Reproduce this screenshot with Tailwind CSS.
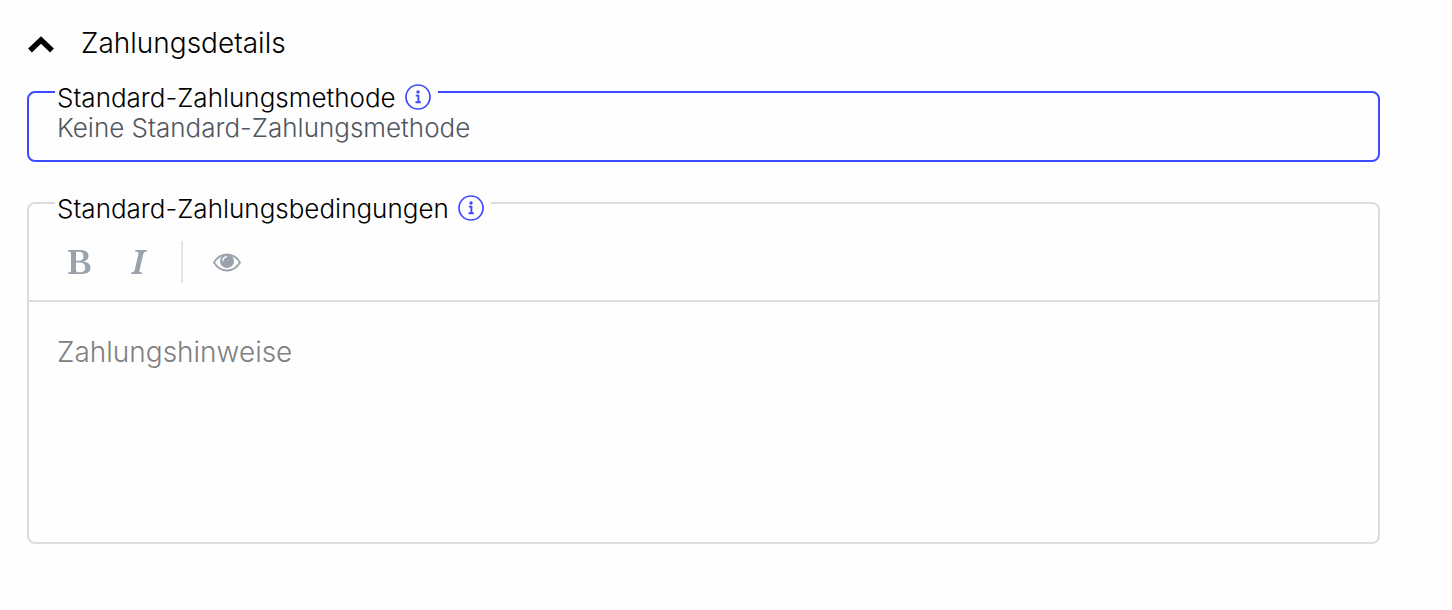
<!DOCTYPE html>
<html lang="de">
<head>
    <meta charset="UTF-8">
    <meta name="viewport" content="width=device-width, initial-scale=1.0">
    <title>Zahlungsdetails</title>
    <script src="https://cdn.jsdelivr.net/npm/@tailwindcss/browser@4"></script>
</head>
<body class="bg-[#fefefe] font-['Inter',sans-serif] font-light text-black">
    <main class="pl-[27px] pr-[72px] pt-[23px]">
        <h2>
            <button type="button" aria-expanded="true" class="flex items-center gap-[26px] text-[28px] leading-10 font-[350]">
                <svg class="w-7 h-5" viewBox="0 0 28 20" fill="none" stroke="currentColor" stroke-width="5.4" aria-hidden="true">
                    <path d="M3 17.500 L14 7 L25 17.500"/>
                </svg>
                Zahlungsdetails
            </button>
        </h2>

        <fieldset class="mt-[9px] rounded-lg border-2 border-[#3d4bff] px-[26px] pb-4">
            <legend class="flex items-center px-[2px] pt-3 text-[26px] leading-7 font-[350]">
                <label for="paymentMethod">Standard-Zahlungsmethode</label>
                <button type="button" aria-label="Info" class="ml-2 mr-1 text-[#3d4bff]">
                    <svg class="size-7" viewBox="0 0 28 28" fill="none" stroke="currentColor" aria-hidden="true">
                        <circle cx="14" cy="13" r="12" stroke-width="1.7"/>
                        <circle cx="14" cy="8" r="1.7" fill="currentColor" stroke="none"/>
                        <path d="M11.8 11.6 H14.4 V18.2 M11.5 18.3 H16.8" stroke-width="1.9"/>
                    </svg>
                </button>
            </legend>
            <select id="paymentMethod" class="block w-full appearance-none px-[2px] text-[26px] leading-8 text-[#50565e] outline-none">
                <option>Keine Standard-Zahlungsmethode</option>
            </select>
        </fieldset>

        <fieldset class="mt-[21px] rounded-lg border-2 border-[#dcdcdc]">
            <legend class="ml-[26px] flex items-center px-[2px] pt-3 text-[26px] leading-7 font-[350]">
                <label for="paymentTerms">Standard-Zahlungsbedingungen</label>
                <button type="button" aria-label="Info" class="ml-2 mr-1 text-[#3d4bff]">
                    <svg class="size-7" viewBox="0 0 28 28" fill="none" stroke="currentColor" aria-hidden="true">
                        <circle cx="14" cy="13" r="12" stroke-width="1.7"/>
                        <circle cx="14" cy="8" r="1.7" fill="currentColor" stroke="none"/>
                        <path d="M11.8 11.6 H14.4 V18.2 M11.5 18.3 H16.8" stroke-width="1.9"/>
                    </svg>
                </button>
            </legend>
            <div class="flex items-center border-b-2 border-[#dcdcdc] pl-5 pt-[13px] pb-3 text-[#9aa2ab]">
                <button type="button" aria-label="Fett" class="flex h-[52px] w-[60px] items-center justify-center">
                    <svg class="w-6 h-6" viewBox="0 0 24 24" fill="currentColor" fill-rule="evenodd" aria-hidden="true">
                        <path d="M1 0 H13 C19 0 21.500 2.500 21.500 6 C21.500 9 19.500 11 16 11.500 C21 12 23.500 14 23.500 17.500 C23.500 22 20 24 13.500 24 H1 V22.500 C3.500 22.200 4 22 4 20 V4 C4 2 3.500 1.800 1 1.500 Z M9 1.700 V10.800 H11.500 C15 10.800 16.500 9.300 16.500 6.200 C16.500 3.200 15 1.700 12 1.700 Z M9 12.500 V20 C9 21.800 9.800 22.300 12.300 22.300 C16.300 22.300 18.200 20.700 18.200 17.400 C18.200 14 16 12.500 12 12.500 Z"/>
                    </svg>
                </button>
                <button type="button" aria-label="Kursiv" class="flex h-[52px] w-[60px] items-center justify-center">
                    <svg class="w-4 h-6" viewBox="0 0 16 24" fill="currentColor" aria-hidden="true">
                        <path d="M4.500 0 H16 L15.700 1.500 C13.300 1.800 12.700 2.300 12.300 4 L8.600 20 C8.200 22 8.700 22.200 11 22.500 L10.700 24 H0 L0.300 22.500 C2.600 22.200 3.200 21.800 3.700 20 L7.400 4 C7.800 2.200 7.200 1.800 4.200 1.500 Z"/>
                    </svg>
                </button>
                <div class="ml-3 h-[42px] w-[2px] bg-[#e4e5e7]"></div>
                <button type="button" aria-label="Vorschau" class="ml-[14px] flex h-[52px] w-[60px] items-center justify-center">
                    <svg class="w-7 h-5" viewBox="0 0 28 20" aria-hidden="true">
                        <path d="M1 10.500 Q6 2.300 14 2.300 T27 10.500 Q22 18.500 14 18.500 T1 10.500 Z" fill="none" stroke="currentColor" stroke-width="1.800"/>
                        <circle cx="14" cy="9" r="7" fill="currentColor"/>
                        <path d="M10 8.500 Q10.200 5.200 13.500 4.800" fill="none" stroke="#fefefe" stroke-width="1.400" stroke-linecap="round"/>
                    </svg>
                </button>
            </div>
            <textarea id="paymentTerms" placeholder="Zahlungshinweise" class="block h-60 w-full resize-none px-7 pt-8 text-[28px] leading-9 outline-none placeholder:text-[#808080]"></textarea>
        </fieldset>
    </main>
</body>
</html>
